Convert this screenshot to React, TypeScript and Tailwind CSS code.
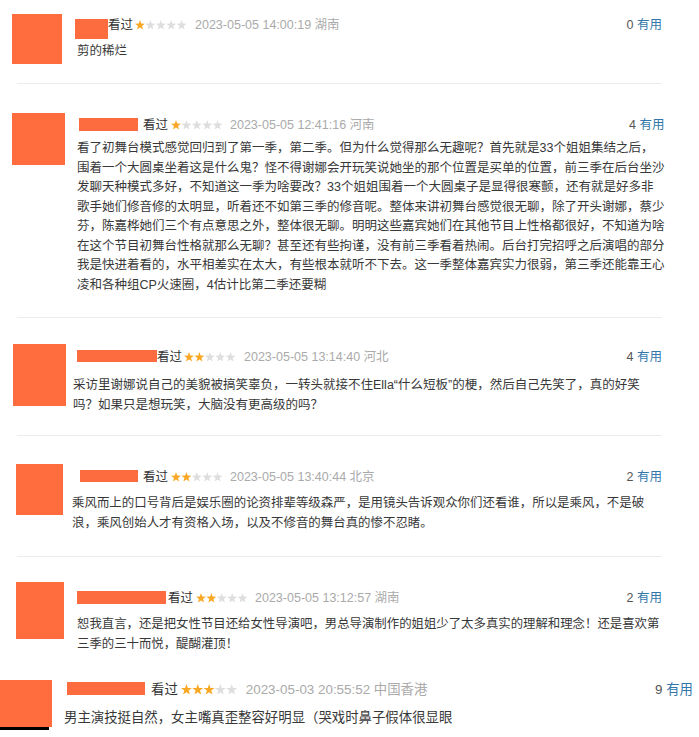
import React from "react";

const STAR = "M5 0.1 L6.23 3.6 L9.95 3.69 L7 5.95 L8.06 9.51 L5 7.4 L1.94 9.51 L3 5.95 L0.05 3.69 L3.77 3.6Z";

function Stars({ n, big }: { n: number; big?: boolean }) {
  const pitch = big ? 11.3 : 10.4;
  const s = big ? 1.1 : 1;
  return (
    <svg
      width={big ? 57 : 52}
      height={big ? 11 : 10}
      viewBox={`0 0 ${big ? 57 : 52} ${big ? 11 : 10}`}
      className="shrink-0"
    >
      {[0, 1, 2, 3, 4].map((i) => (
        <path
          key={i}
          d={STAR}
          transform={`translate(${i * pitch} 0) scale(${s})`}
          fill={i < n ? "#f9a825" : "#dedede"}
        />
      ))}
    </svg>
  );
}

type ReviewProps = {
  rowCls: string;
  avatarCls: string;
  colCls: string;
  nameCls: string;
  seenCls: string;
  starCls: string;
  dateCls: string;
  bodyCls: string;
  stars: number;
  date: string;
  count: number;
  lines: string[];
  big?: boolean;
  children?: React.ReactNode;
};

function Review(p: ReviewProps) {
  return (
    <div className={`flex items-start ${p.rowCls}`}>
      <div className="flex flex-col shrink-0">
        <div className={`bg-[#ff6d3f] ${p.avatarCls}`} />
        {p.children}
      </div>
      <div className={`flex-1 flex flex-col ${p.colCls}`}>
        <div className="flex items-start h-[20px] leading-[20px] whitespace-nowrap">
          <div className={`shrink-0 bg-[#fd6c3e] ${p.nameCls}`} />
          <span className={`text-[#333] ${p.seenCls}`}>看过</span>
          <div className={p.starCls}>
            <Stars n={p.stars} big={p.big} />
          </div>
          <span className={`text-[#aaa] ${p.dateCls}`}>{p.date}</span>
          <span className="ml-auto">
            <span className="text-[#555]">{p.count}</span>{" "}
            <span className="text-[#3377aa]">有用</span>
          </span>
        </div>
        <div className={`text-[#383838] whitespace-nowrap ${p.bodyCls}`}>
          {p.lines.map((l, i) => (
            <div key={i}>{l}</div>
          ))}
        </div>
      </div>
    </div>
  );
}

function Divider() {
  return <div className="ml-[17px] w-[645px] h-px bg-[#ececec]" />;
}

export default function App() {
  return (
    <div className="w-[699px] h-[737px] bg-white overflow-hidden text-[12.5px] font-['Liberation_Sans','Noto_Sans_CJK_SC',sans-serif]">
      <Review
        rowCls="h-[83px] pr-[37px]"
        avatarCls="ml-[12px] mt-[14px] w-[50px] h-[50px]"
        colCls="ml-[15px] mt-[15px]"
        nameCls="-ml-[2px] mt-[4px] w-[33px] h-[20px]"
        seenCls="ml-0"
        starCls="ml-[2px] mt-[5px]"
        dateCls="ml-[8px]"
        bodyCls="mt-[6px] leading-[20px]"
        stars={1}
        date="2023-05-05 14:00:19 湖南"
        count={0}
        lines={["剪的稀烂"]}
      />
      <Divider />

      <Review
        rowCls="h-[233px] pr-[37px]"
        avatarCls="ml-[12px] mt-[29px] w-[53px] h-[52px]"
        colCls="ml-[12px] mt-[31px]"
        nameCls="ml-[2px] mt-[3px] w-[59px] h-[13px]"
        seenCls="ml-[5px]"
        starCls="ml-[3px] mt-[5px]"
        dateCls="ml-[7px]"
        bodyCls="mt-[4px] leading-[19.5px]"
        stars={1}
        date="2023-05-05 12:41:16 河南"
        count={4}
        lines={[
          "看了初舞台模式感觉回归到了第一季，第二季。但为什么觉得那么无趣呢？首先就是33个姐姐集结之后，",
          "围着一个大圆桌坐着这是什么鬼？怪不得谢娜会开玩笑说她坐的那个位置是买单的位置，前三季在后台坐沙",
          "发聊天种模式多好，不知道这一季为啥要改？33个姐姐围着一个大圆桌子是显得很寒颤，还有就是好多非",
          "歌手她们修音修的太明显，听着还不如第三季的修音呢。整体来讲初舞台感觉很无聊，除了开头谢娜，蔡少",
          "芬，陈嘉桦她们三个有点意思之外，整体很无聊。明明这些嘉宾她们在其他节目上性格都很好，不知道为啥",
          "在这个节目初舞台性格就那么无聊？甚至还有些拘谨，没有前三季看着热闹。后台打完招呼之后演唱的部分",
          "我是快进着看的，水平相差实在太大，有些根本就听不下去。这一季整体嘉宾实力很弱，第三季还能靠王心",
          "凌和各种组CP火速圈，4估计比第二季还要糊",
        ]}
      />
      <Divider />

      <Review
        rowCls="h-[117px] pr-[37px]"
        avatarCls="ml-[13px] mt-[26px] w-[53px] h-[62px]"
        colCls="ml-[7px] mt-[29px]"
        nameCls="ml-[4px] mt-[3px] w-[80px] h-[12px]"
        seenCls="ml-0"
        starCls="ml-[2px] mt-[5px]"
        dateCls="ml-[8px]"
        bodyCls="mt-[8px] leading-[20px]"
        stars={2}
        date="2023-05-05 13:14:40 河北"
        count={4}
        lines={[
          "采访里谢娜说自己的美貌被搞笑辜负，一转头就接不住Ella“什么短板”的梗，然后自己先笑了，真的好笑",
          "吗？如果只是想玩笑，大脑没有更高级的吗？",
        ]}
      />
      <Divider />

      <Review
        rowCls="h-[120px] pr-[37px]"
        avatarCls="ml-[16px] mt-[28px] w-[47px] h-[51px]"
        colCls="ml-[9px] mt-[31px]"
        nameCls="ml-[8px] mt-[3px] w-[58px] h-[12px]"
        seenCls="ml-[5px]"
        starCls="ml-[3px] mt-[5px]"
        dateCls="ml-[7px]"
        bodyCls="mt-[6px] leading-[20px] text-[12.45px]"
        stars={2}
        date="2023-05-05 13:40:44 北京"
        count={2}
        lines={[
          "乘风而上的口号背后是娱乐圈的论资排辈等级森严，是用镜头告诉观众你们还看谁，所以是乘风，不是破",
          "浪，乘风创始人才有资格入场，以及不修音的舞台真的惨不忍睹。",
        ]}
      />
      <Divider />

      <Review
        rowCls="h-[113px] pr-[37px]"
        avatarCls="ml-[16px] mt-[25px] w-[48px] h-[57px]"
        colCls="ml-[13px] mt-[31px]"
        nameCls="ml-0 mt-[3px] w-[89px] h-[13px]"
        seenCls="ml-[2px]"
        starCls="ml-[3px] mt-[5px]"
        dateCls="ml-[7px]"
        bodyCls="mt-[6px] leading-[20px] text-[12.4px]"
        stars={2}
        date="2023-05-05 13:12:57 湖南"
        count={2}
        lines={[
          "恕我直言，还是把女性节目还给女性导演吧，男总导演制作的姐姐少了太多真实的理解和理念！还是喜欢第",
          "三季的三十而悦，醍醐灌顶！",
        ]}
      />

      <div className="text-[13.4px]">
        <Review
          rowCls="h-[67px] pr-[6px]"
          avatarCls="ml-0 mt-[10px] w-[52px] h-[47px]"
          colCls="ml-[12px] mt-[10px]"
          nameCls="ml-[3px] mt-[2px] w-[78px] h-[13px]"
          seenCls="ml-[6px]"
          starCls="ml-[3px] mt-[4px]"
          dateCls="ml-[8px]"
          bodyCls="mt-[8px] leading-[20px]"
          stars={3}
          date="2023-05-03 20:55:52 中国香港"
          count={9}
          big
          lines={["男主演技挺自然，女主嘴真歪整容好明显（哭戏时鼻子假体很显眼"]}
        >
          <div className="w-[49px] h-[3px] bg-black" />
        </Review>
      </div>
    </div>
  );
}
